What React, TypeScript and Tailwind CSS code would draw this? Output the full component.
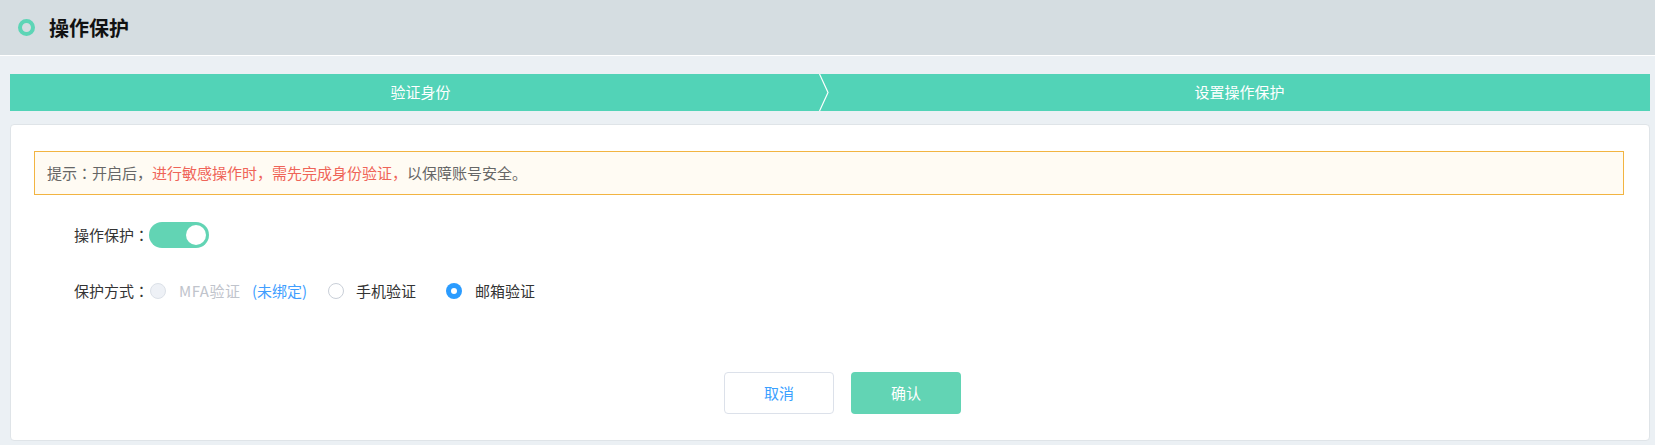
import { useState } from 'react';

// Types
interface StepBarProps {
  steps: [string, string];
}

interface RadioOptionProps {
  checked?: boolean;
  disabled?: boolean;
}

// Centered full-width colon (TC glyph sits in the middle of the em box)
const Colon = () => <span className="font-['Noto_Sans_CJK_TC',sans-serif]">：</span>;

// Components
const PageHeader = () => (
  <div className="h-[56px] bg-[#d5dde1] border-b border-white flex items-center pl-[18px]">
    <span className="w-[17px] h-[17px] rounded-full border-[4px] border-[#5dd5b6]" />
    <h1 className="ml-[14px] text-[20px] leading-[24px] font-bold text-[#111]">操作保护</h1>
  </div>
);

const StepBar = ({ steps }: StepBarProps) => (
  <div className="h-[37px] bg-[#52d3b7] flex items-stretch text-white text-[15px]">
    <div className="w-[809px] shrink-0 flex items-center justify-center pl-[12px]">{steps[0]}</div>
    <svg width="10" height="37" viewBox="0 0 10 37" className="shrink-0">
      <polyline points="0.5,0 9,18.5 0.5,37" fill="none" stroke="#ffffff" strokeWidth="1.2" />
    </svg>
    <div className="flex-1 flex items-center justify-center">{steps[1]}</div>
  </div>
);

const Toggle = ({ on, onChange }: { on: boolean; onChange: () => void }) => (
  <button
    onClick={onChange}
    className={`w-[60px] h-[26px] shrink-0 rounded-full flex items-center px-[3px] ${on ? 'bg-[#62d4b4] justify-end' : 'bg-[#dcdfe6] justify-start'}`}
  >
    <span className="w-[20px] h-[20px] rounded-full bg-white" />
  </button>
);

const RadioDot = ({ checked, disabled }: RadioOptionProps) => {
  if (disabled) {
    return <span className="w-[16px] h-[16px] rounded-full border border-[#dce1e8] bg-[#eef1f6] shrink-0" />;
  }
  if (checked) {
    return (
      <span className="w-[16px] h-[16px] rounded-full bg-[#2b9cff] flex items-center justify-center shrink-0">
        <span className="w-[6px] h-[6px] rounded-full bg-white" />
      </span>
    );
  }
  return <span className="w-[16px] h-[16px] rounded-full border border-[#c9cfd8] bg-white shrink-0" />;
};

// Main component
export default function App() {
  const [enabled, setEnabled] = useState(true);
  const [method, setMethod] = useState<'phone' | 'email'>('email');

  return (
    <div className="min-h-screen bg-[#ebf0f4] font-['Noto_Sans_CJK_SC',sans-serif]">
      <PageHeader />

      <div className="pl-[10px] pr-[5px] pt-[18px] pb-[6px]">
        <StepBar steps={['验证身份', '设置操作保护']} />

        <div className="mt-[13px] bg-white border border-[#dfe4e8] rounded-[4px] pt-[26px] pb-[26px] pl-[23px] pr-[25px]">
          <div className="h-[44px] border border-[#f2b441] bg-[#fffbf3] flex items-center pl-[12px] text-[15px] text-[#666] whitespace-nowrap">
            提示<Colon />开启后，
            <span className="text-[#ef6458]">进行敏感操作时，需先完成身份验证，</span>
            以保障账号安全。
          </div>

          <div className="pl-[40px] text-[15px] text-[#333] whitespace-nowrap">
            <div className="mt-[27px] h-[26px] flex items-center">
              <span className="w-[75px] shrink-0">操作保护<Colon /></span>
              <Toggle on={enabled} onChange={() => setEnabled(!enabled)} />
            </div>

            <div className="mt-[33px] h-[20px] flex items-center">
              <span className="w-[76px] shrink-0">保护方式<Colon /></span>
              <RadioDot disabled />
              <span className="ml-[13px] w-[73px] shrink-0 text-[#c0c4cc] tracking-[0.5px]">MFA验证</span>
              <span className="w-[76px] shrink-0 text-[#409eff]">(未绑定)</span>
              <button className="flex items-center" onClick={() => setMethod('phone')}>
                <RadioDot checked={method === 'phone'} />
                <span className="ml-[12px] w-[90px] text-left">手机验证</span>
              </button>
              <button className="flex items-center" onClick={() => setMethod('email')}>
                <RadioDot checked={method === 'email'} />
                <span className="ml-[13px]">邮箱验证</span>
              </button>
            </div>
          </div>

          <div className="mt-[71px] flex justify-center gap-[17px] pl-[27px] text-[15px]">
            <button className="w-[110px] h-[42px] rounded-[4px] border border-[#dce1ea] bg-white text-[#3aa0ff]">取消</button>
            <button className="w-[110px] h-[42px] rounded-[4px] bg-[#62d4b4] text-white">确认</button>
          </div>
        </div>
      </div>
    </div>
  );
}
